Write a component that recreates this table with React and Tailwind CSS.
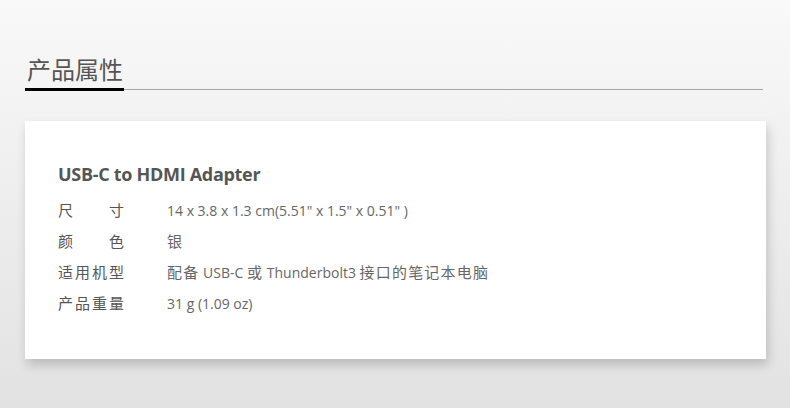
const specs = [
  { label: ["尺", "寸"], value: [["14 x 3.8 x 1.3 cm(5.51\" x 1.5\" x 0.51\" )", false]] },
  { label: ["颜", "色"], value: [["银", true]] },
  {
    label: ["适", "用", "机", "型"],
    value: [
      ["配备", true],
      [" USB-C ", false],
      ["或", true],
      [" Thunderbolt3 ", false],
      ["接口的笔记本电脑", true],
    ],
  },
  { label: ["产", "品", "重", "量"], value: [["31 g (1.09 oz)", false]] },
];

export default function App() {
  return (
    <div className="w-[790px] h-[408px] overflow-hidden bg-gradient-to-b from-[#f9f9f9] to-[#e2e2e2] font-['Open_Sans','Noto_Sans_CJK_SC',sans-serif]">
      <div className="pt-[53px] px-[25px]">
        <h2 className="pl-[2px] text-[24px] leading-[32px] text-[#555] font-['Noto_Sans_CJK_SC',sans-serif]">产品属性</h2>
        <div className="flex items-center w-[738px] mt-[3px]">
          <div className="w-[99px] h-[3px] bg-black" />
          <div className="flex-1 h-px bg-[#a5a5a5]" />
        </div>
      </div>

      <div className="mt-[30px] ml-[25px] w-[741px] h-[238px] bg-white shadow-[2px_6px_10px_rgba(0,0,0,0.18)] pl-[33px] pt-[41px]">
        <h3 className="text-[18px] leading-[24px] font-bold text-[#555] tracking-[-0.3px]">USB-C to HDMI Adapter</h3>
        <div className="mt-[9px] flex flex-col">
          {specs.map((s, i) => (
            <div key={i} className="flex items-center h-[31px] text-[14px] text-[#666]">
              <div className="w-[109px]">
                <div className="flex justify-between w-[66px] text-[15px] text-[#555] font-['Noto_Sans_CJK_SC',sans-serif]">
                  {s.label.map((c, j) => (
                    <span key={j}>{c}</span>
                  ))}
                </div>
              </div>
              <span className="whitespace-pre">
                {s.value.map(([t, cjk], j) =>
                  cjk ? (
                    <span key={j} className="text-[15px] tracking-[1.2px] font-['Noto_Sans_CJK_SC',sans-serif]">{t}</span>
                  ) : (
                    <span key={j}>{t}</span>
                  )
                )}
              </span>
            </div>
          ))}
        </div>
      </div>
    </div>
  );
}
